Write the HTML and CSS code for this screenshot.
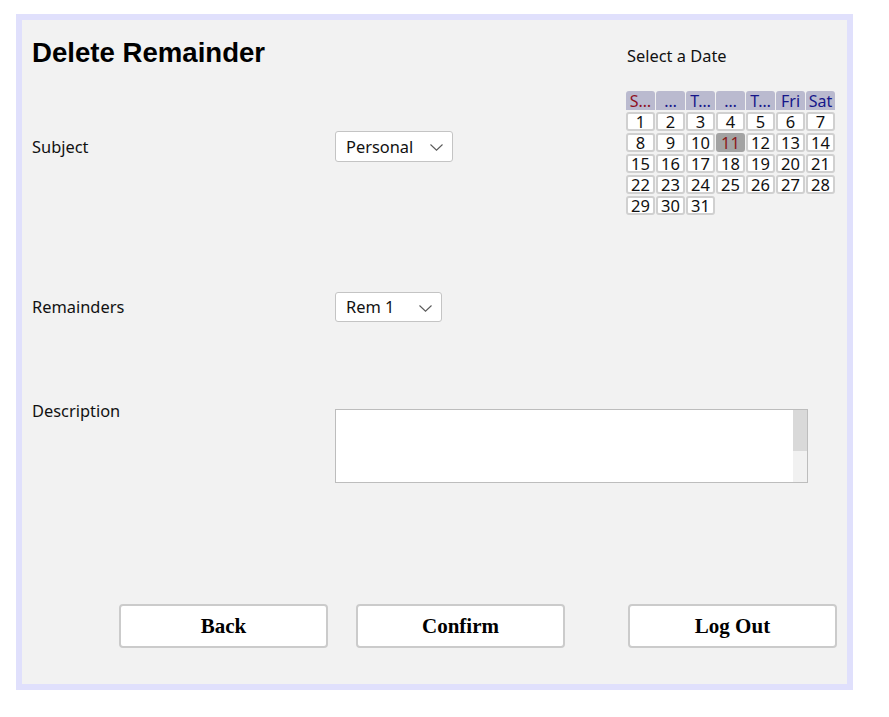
FILE: index.html
```html
<!DOCTYPE html>
<html lang="en">
<head>
<meta charset="utf-8">
<title>Delete Remainder</title>
<link rel="stylesheet" href="styles.css">
</head>
<body>
<div class="page">
  <div class="frame">
    <div class="top">
      <div class="left">
        <h1 class="title">Delete Remainder</h1>
        <div class="row row-subject">
          <span class="label">Subject</span>
          <div class="select select-subject">
            <span class="select-text">Personal</span>
            <svg class="chevron" width="13" height="7" viewBox="0 0 13 7"><path d="M0.5 0.5 L6.5 6.2 L12.5 0.5" fill="none" stroke="#5a5a5a" stroke-width="1.1"/></svg>
          </div>
        </div>
      </div>
      <div class="calendar">
        <div class="cal-title">Select a Date</div>
        <div class="cal-grid">
          <div class="cal-head sun">S…</div>
          <div class="cal-head">…</div>
          <div class="cal-head">T…</div>
          <div class="cal-head">…</div>
          <div class="cal-head">T…</div>
          <div class="cal-head">Fri</div>
          <div class="cal-head">Sat</div>
          <div class="day">1</div><div class="day">2</div><div class="day">3</div><div class="day">4</div><div class="day">5</div><div class="day">6</div><div class="day">7</div>
          <div class="day">8</div><div class="day">9</div><div class="day">10</div><div class="day today">11</div><div class="day">12</div><div class="day">13</div><div class="day">14</div>
          <div class="day">15</div><div class="day">16</div><div class="day">17</div><div class="day">18</div><div class="day">19</div><div class="day">20</div><div class="day">21</div>
          <div class="day">22</div><div class="day">23</div><div class="day">24</div><div class="day">25</div><div class="day">26</div><div class="day">27</div><div class="day">28</div>
          <div class="day">29</div><div class="day">30</div><div class="day">31</div>
        </div>
      </div>
    </div>

    <div class="row row-rem">
      <span class="label">Remainders</span>
      <div class="select select-rem">
        <span class="select-text">Rem 1</span>
        <svg class="chevron" width="13" height="7" viewBox="0 0 13 7"><path d="M0.5 0.5 L6.5 6.2 L12.5 0.5" fill="none" stroke="#5a5a5a" stroke-width="1.1"/></svg>
      </div>
    </div>

    <div class="row row-desc">
      <span class="label">Description</span>
      <div class="textarea">
        <div class="textarea-body"></div>
        <div class="scrollbar"><div class="thumb"></div></div>
      </div>
    </div>

    <div class="buttons">
      <button class="btn">Back</button>
      <button class="btn">Confirm</button>
      <button class="btn btn-logout">Log Out</button>
    </div>
  </div>
</div>
</body>
</html>
```

FILE: styles.css
```css
* { box-sizing: border-box; }

body {
  margin: 0;
  background: #ffffff;
  font-family: "Noto Sans", "Open Sans", sans-serif;
  color: #111;
}

.page {
  padding: 14px 0 0 16px;
}

.frame {
  width: 837px;
  height: 676px;
  border: 6px solid #e0e0fc;
  background: #f2f2f2;
  padding: 0 10px;
  display: flex;
  flex-direction: column;
}

.top {
  display: flex;
  height: 195px;
}

.left {
  width: 594px;
  padding-top: 18px;
}

.title {
  margin: 0;
  font-family: "Liberation Sans", Arial, sans-serif;
  font-weight: bold;
  font-size: 27.6px;
  line-height: 30px;
  color: #000;
}

.row {
  display: grid;
  grid-template-columns: 303px auto;
  align-items: center;
}

.row-subject {
  margin-top: 63px;
  height: 31px;
}

.row-rem {
  margin-top: 77px;
  height: 30px;
}

.row-desc {
  margin-top: 78px;
  align-items: start;
}

.label {
  font-size: 16.4px;
  line-height: 22px;
  color: #111;
}

.select {
  position: relative;
  height: 31px;
  background: #fff;
  border: 1px solid #c4c4c4;
  border-radius: 3px;
  display: flex;
  align-items: center;
  padding-left: 10px;
}

.select-subject { width: 118px; }
.select-rem { width: 107px; height: 30px; }

.select-text {
  font-size: 16.4px;
  line-height: 22px;
}

.chevron {
  position: absolute;
  right: 9px;
  top: 12px;
}

.textarea {
  margin-top: 9px;
  width: 473px;
  height: 74px;
  border: 1px solid #bdbdbd;
  background: #fff;
  display: flex;
}

.textarea-body {
  flex: 1;
}

.scrollbar {
  width: 14px;
  background: #f1f1f1;
}

.thumb {
  height: 41px;
  background: #d9d9d9;
}

.calendar {
  padding-top: 25px;
  width: 211px;
}

.cal-title {
  font-size: 16.4px;
  line-height: 22px;
  padding-left: 1px;
  color: #111;
}

.cal-grid {
  margin-top: 24px;
  display: grid;
  grid-template-columns: repeat(7, 29px);
  grid-auto-rows: 19px;
  column-gap: 1px;
  row-gap: 2px;
}

.cal-head {
  background: #babacf;
  border-radius: 3px 3px 0 0;
  color: #16168a;
  font-size: 16px;
  line-height: 20px;
  text-align: center;
  white-space: nowrap;
}

.cal-head.sun { color: #8f0f1f; }

.day {
  background: #fff;
  border: 2px solid #d0d0d0;
  border-radius: 3px;
  font-size: 16.5px;
  line-height: 15px;
  text-align: center;
  color: #111;
}

.day.today {
  background: #a3a3a3;
  border-color: #a3a3a3;
  color: #8b1a1a;
}

.buttons {
  margin-top: 121px;
  padding-left: 87px;
  display: flex;
  gap: 28px;
}

.btn {
  width: 209px;
  height: 44px;
  background: #fff;
  border: 2px solid #cbcbcb;
  border-radius: 4px;
  font-family: "Liberation Serif", "Times New Roman", serif;
  font-weight: bold;
  font-size: 21px;
  color: #000;
  padding: 0;
}

.btn-logout {
  margin-left: 35px;
}
```
